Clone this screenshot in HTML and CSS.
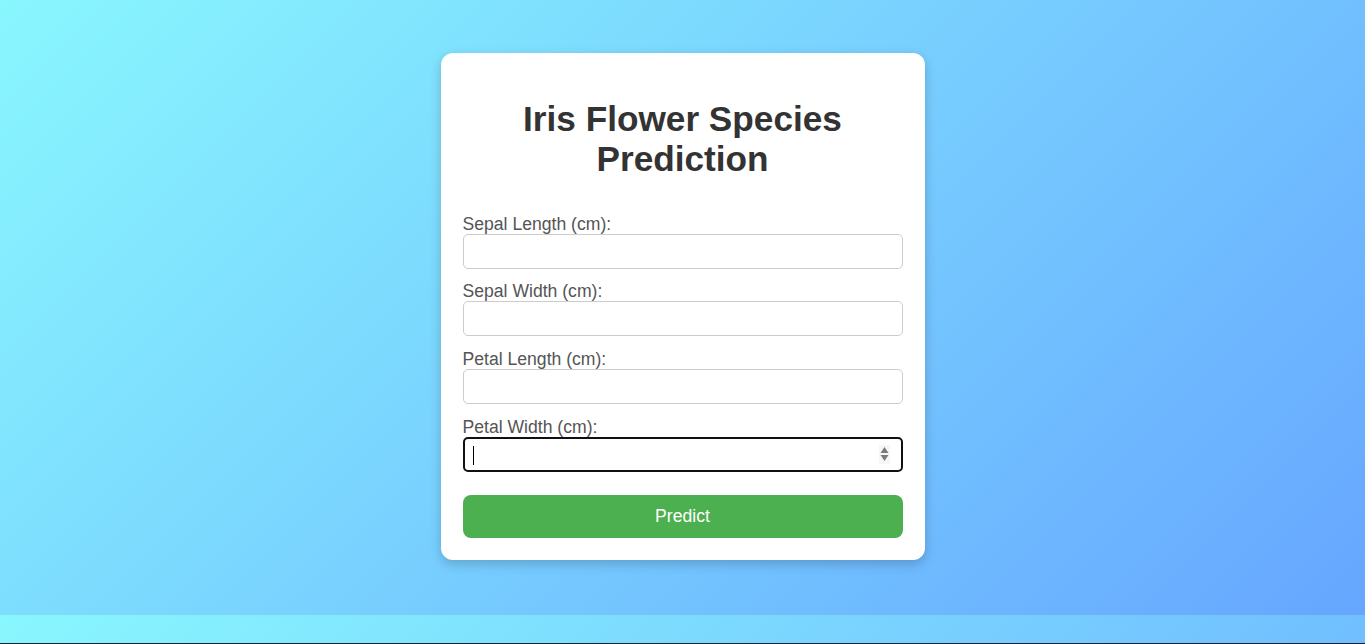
FILE: index.html
```html
<!DOCTYPE html>
<html lang="en">
<head>
<meta charset="utf-8">
<title>Iris Flower Species Prediction</title>
<link rel="stylesheet" href="styles.css">
</head>
<body>
  <main class="card">
    <h1 class="title">Iris Flower Species Prediction</h1>
    <form class="form">
      <div class="field">
        <label class="label" for="sl">Sepal Length (cm):</label>
        <input class="input" id="sl" type="text">
      </div>
      <div class="field">
        <label class="label" for="sw">Sepal Width (cm):</label>
        <input class="input" id="sw" type="text">
      </div>
      <div class="field">
        <label class="label" for="pl">Petal Length (cm):</label>
        <input class="input" id="pl" type="text">
      </div>
      <div class="field field-last">
        <label class="label" for="pw">Petal Width (cm):</label>
        <div class="input-wrap">
          <input class="input input-focused" id="pw" type="text">
          <span class="caret"></span>
          <span class="spinner">
            <svg width="11" height="18" viewBox="0 0 11 18"><path d="M5.5 2 L9.5 8 L1.5 8 Z" fill="#7a7a7a"/><path d="M1.5 10 L9.5 10 L5.5 16 Z" fill="#7a7a7a"/></svg>
          </span>
        </div>
      </div>
      <button class="button" type="button">Predict</button>
    </form>
  </main>
  <div class="edge"></div>
</body>
</html>
```

FILE: styles.css
```css
html {
  margin: 0;
}
body {
  margin: 0;
  padding: 53px 0 55px;
  display: flex;
  justify-content: center;
  align-items: flex-start;
  font-family: "Liberation Sans", Arial, sans-serif;
  font-size: 16px;
  background: linear-gradient(135deg, #89f7fe 0%, #66a6ff 100%);
}
.card {
  width: 440px;
  padding: 22px;
  background: #ffffff;
  border-radius: 12px;
  box-shadow: 0 4px 12px rgba(0, 0, 0, 0.2);
}
.title {
  margin: 23.5px 0 34px;
  font-size: 35.2px;
  line-height: 40.5px;
  font-weight: bold;
  text-align: center;
  color: #333333;
}
.form {
  display: flex;
  flex-direction: column;
  margin: 0;
}
.field {
  display: flex;
  flex-direction: column;
  margin-bottom: 12.8px;
}
.field-last {
  margin-bottom: 22.7px;
}
.label {
  display: block;
  font-size: 17.6px;
  line-height: 20px;
  color: #555555;
}
.input {
  display: block;
  width: 100%;
  height: 35px;
  box-sizing: border-box;
  margin: 0;
  padding: 8px 10px;
  font-family: "Liberation Sans", Arial, sans-serif;
  font-size: 16px;
  border: 1px solid #cccccc;
  border-radius: 5px;
  background: #ffffff;
  outline: none;
}
.input-wrap {
  position: relative;
}
.input-focused {
  border: 2px solid #101010;
  border-radius: 5px;
}
.caret {
  position: absolute;
  left: 10px;
  top: 9px;
  width: 1px;
  height: 19px;
  background: #000000;
}
.spinner {
  position: absolute;
  right: 13px;
  top: 8px;
  width: 11px;
  height: 19px;
  display: flex;
  align-items: center;
  justify-content: center;
  background: #f6f6f6;
}
.spinner svg {
  display: block;
}
.button {
  display: block;
  width: 100%;
  height: 43px;
  margin: 0;
  padding: 0;
  border: none;
  border-radius: 8px;
  background: #4caf50;
  color: #ffffff;
  font-family: "Liberation Sans", Arial, sans-serif;
  font-size: 17.6px;
  cursor: pointer;
}
.edge {
  position: fixed;
  left: 0;
  right: 0;
  bottom: 0;
  height: 1px;
  background: #1c2024;
}
```
